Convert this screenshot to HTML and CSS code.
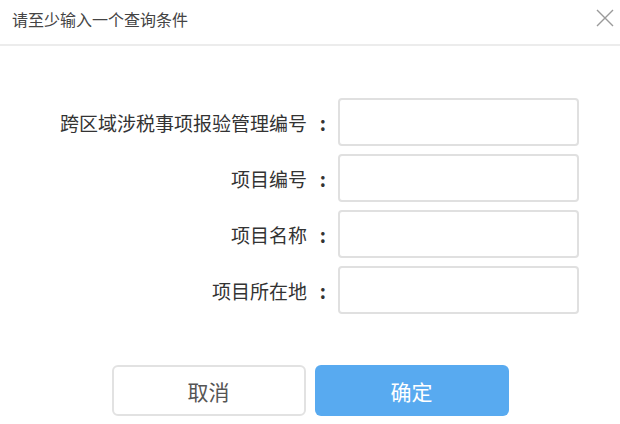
FILE: index.html
```html
<!DOCTYPE html>
<html lang="zh-CN">
<head>
  <meta charset="UTF-8">
  <meta name="viewport" content="width=device-width, initial-scale=1.0">
  <title>查询条件</title>
  <link rel="stylesheet" href="styles.css">
</head>
<body>
  <div class="dialog">
    <!-- Header -->
    <div class="dialog-header">
      <h3>请至少输入一个查询条件</h3>
      <button class="close-button" aria-label="关闭">
        <svg width="18" height="18" viewBox="0 0 18 18">
          <path d="M1 1 L17 17 M17 1 L1 17" stroke="#9a9a9a" stroke-width="1.4" fill="none"/>
        </svg>
      </button>
    </div>

    <form class="query-form">
      <div class="form-row">
        <label for="reportNo">跨区域涉税事项报验管理编号<span class="colon">:</span></label>
        <input type="text" id="reportNo">
      </div>
      <div class="form-row">
        <label for="projectNo">项目编号<span class="colon">:</span></label>
        <input type="text" id="projectNo">
      </div>
      <div class="form-row">
        <label for="projectName">项目名称<span class="colon">:</span></label>
        <input type="text" id="projectName">
      </div>
      <div class="form-row">
        <label for="projectPlace">项目所在地<span class="colon">:</span></label>
        <input type="text" id="projectPlace">
      </div>

      <div class="form-actions">
        <button type="button" class="btn btn-cancel">取消</button>
        <button type="submit" class="btn btn-confirm">确定</button>
      </div>
    </form>
  </div>
</body>
</html>
```

FILE: styles.css
```css
body {
  font-family: "Noto Sans CJK SC", "Liberation Sans", sans-serif;
  background-color: #fff;
  margin: 0;
  padding: 0;
}

.dialog {
  width: 620px;
}

/* Header */
.dialog-header {
  height: 44px;
  border-bottom: 2px solid #ececec;
  display: flex;
  justify-content: space-between;
  align-items: center;
  padding: 0 6px 0 12px;
}

.dialog-header h3 {
  margin: 0 0 6px 0;
  font-size: 16px;
  font-weight: normal;
  color: #444;
}

.close-button {
  background: none;
  border: none;
  padding: 0;
  width: 18px;
  height: 18px;
  margin: 0 0 8px 0;
  cursor: pointer;
}

.close-button svg {
  display: block;
}

/* Form */
.query-form {
  padding-top: 52px;
  display: flex;
  flex-direction: column;
  gap: 8px;
}

.form-row {
  display: flex;
  align-items: center;
  gap: 8px;
}

.form-row label {
  width: 330px;
  text-align: right;
  font-size: 19px;
  color: #333;
}

.form-row .colon {
  display: inline-block;
  width: 23px;
  padding-right: 4px;
  box-sizing: border-box;
  text-align: right;
  font-weight: bold;
}

.form-row input {
  width: 241px;
  height: 48px;
  box-sizing: border-box;
  border: 2px solid #e0e0e0;
  border-radius: 4px;
  font-size: 16px;
  padding: 0 8px;
}

.form-actions {
  margin-top: 43px;
  display: flex;
  justify-content: center;
  gap: 9px;
}

.btn {
  width: 194px;
  height: 51px;
  border-radius: 6px;
  font-family: inherit;
  font-size: 21px;
  cursor: pointer;
  box-sizing: border-box;
}

.btn-cancel {
  background-color: #fff;
  border: 2px solid #e2e2e2;
  color: #555;
}

.btn-confirm {
  background-color: #58aaf0;
  border: none;
  color: #fff;
}
```
